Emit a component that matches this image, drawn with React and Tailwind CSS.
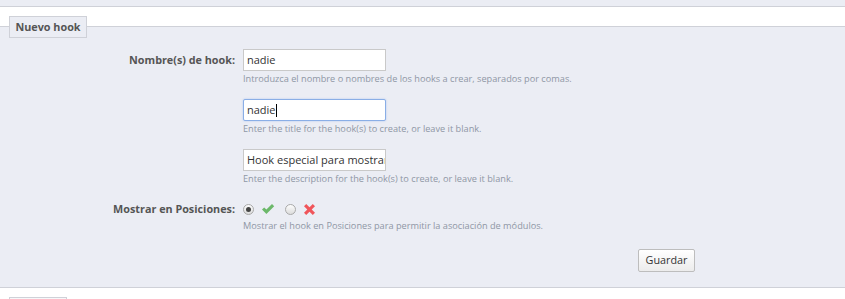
import React from "react";

function Radio({ checked }) {
  return (
    <span className="inline-flex items-center justify-center w-[11px] h-[11px] rounded-full border border-[#a9a9a9] bg-gradient-to-b from-[#fdfdfd] to-[#dcdcdc]">
      {checked ? <span className="w-[5px] h-[5px] rounded-full bg-[#444]" /> : null}
    </span>
  );
}

function Check() {
  return (
    <svg width="14" height="12" viewBox="0 0 14 12">
      <path d="M1 6.5 L3.2 4.4 L5.4 6.6 L11 1 L13.2 3.2 L5.4 11 Z" fill="#6cb86a" />
    </svg>
  );
}

function Cross() {
  return (
    <svg width="13" height="13" viewBox="0 0 13 13">
      <path d="M1 3.2 L3.2 1 L6.5 4.3 L9.8 1 L12 3.2 L8.7 6.5 L12 9.8 L9.8 12 L6.5 8.7 L3.2 12 L1 9.8 L4.3 6.5 Z" fill="#f0555a" />
    </svg>
  );
}

function Help({ children }) {
  return <div className="text-[9.2px] leading-[14px] text-[#8f97a5] mt-[1px] whitespace-nowrap">{children}</div>;
}

export default function App() {
  const font = { fontFamily: '"Open Sans", "Noto Sans", Arial, sans-serif' };
  return (
    <div className="w-[845px] h-[299px] bg-white overflow-hidden" style={font}>
      <div className="h-[7px] bg-[#ebedf4] border-b border-[#cfd1d8]" />
      <div className="h-[19px]" />
      <div className="border-t border-b border-[#cfd1d8] bg-[#ebedf4] h-[262px]">
        <div className="ml-[9px] -mt-[11px] w-[78px] h-[22px] border border-[#cfd1d8] bg-[#ebedf4] flex items-center justify-center text-[10.8px] font-bold text-[#555]">
          Nuevo hook
        </div>
        <div className="grid grid-cols-[235px_1fr] gap-x-[8px] mt-[11px]">
          <div className="text-right text-[10.8px] font-bold text-[#555] leading-[22px]">Nombre(s) de hook:</div>
          <div>
            <div className="w-[143px] h-[22px] border border-[#c9c9c9] bg-white px-[3px] text-[11px] leading-[20px] text-[#333]">nadie</div>
            <Help>Introduzca el nombre o nombres de los hooks a crear, separados por comas.</Help>
          </div>

          <div />
          <div className="mt-[13px]">
            <div className="w-[143px] h-[22px] border border-[#8aaee6] rounded-[2px] shadow-[0_0_2px_#a9c4f0] bg-white px-[3px] text-[11px] leading-[20px] text-[#333] flex items-center">
              nadie<span className="inline-block w-[1px] h-[13px] bg-black" />
            </div>
            <Help>Enter the title for the hook(s) to create, or leave it blank.</Help>
          </div>

          <div />
          <div className="mt-[13px]">
            <div className="w-[143px] h-[22px] border border-[#c9c9c9] bg-white px-[3px] text-[11px] leading-[20px] text-[#333] overflow-hidden whitespace-nowrap">Hook especial para mostrar</div>
            <Help>Enter the description for the hook(s) to create, or leave it blank.</Help>
          </div>

          <div className="text-right text-[10.8px] font-bold text-[#555] leading-[18px] mt-[14px]">Mostrar en Posiciones:</div>
          <div className="mt-[14px]">
            <div className="h-[18px] flex items-center">
              <Radio checked />
              <span className="ml-[7px]"><Check /></span>
              <span className="ml-[10px]"><Radio /></span>
              <span className="ml-[7px]"><Cross /></span>
            </div>
            <Help>Mostrar el hook en Posiciones para permitir la asociación de módulos.</Help>
          </div>
        </div>
        <div className="flex mt-[16px] pl-[638px]">
          <button className="w-[57px] h-[23px] border border-[#bdbdbd] rounded-[2px] bg-gradient-to-b from-white to-[#ececec] text-[10.8px] text-[#333]">Guardar</button>
        </div>
      </div>
      <div className="ml-[9px] mt-[9px] w-[58px] h-[10px] border border-[#cfd1d8] bg-[#f7f7f9]" />
    </div>
  );
}
